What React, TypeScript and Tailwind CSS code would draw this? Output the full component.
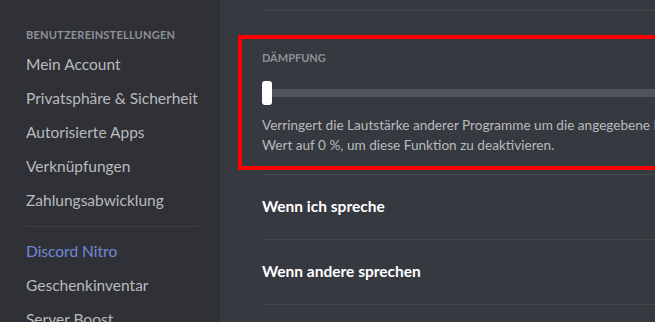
import type { ReactNode } from "react"

const font = { fontFamily: "Lato, 'Noto Sans', sans-serif" }

function NavItem({ children, active }: { children: ReactNode; active?: boolean }) {
    return (
        <div
            className={
                "h-[34px] flex items-center whitespace-nowrap text-[15.5px] leading-5 " +
                (active ? "text-[#7289da]" : "text-[#b9bbbe]")
            }
        >
            {children}
        </div>
    )
}

function Row({ title }: { title: string }) {
    return (
        <div className="h-[65px] flex items-center border-b border-[#42454a] text-[15.5px] font-bold text-white">
            {title}
        </div>
    )
}

export default function App() {
    return (
        <div className="flex w-[655px] h-[322px] overflow-hidden" style={font}>
            {/* Seitenleiste */}
            <aside className="w-[220px] shrink-0 bg-[#2f3136] pl-[26px] pr-[22px] pt-[28px]">
                <div className="h-[14px] text-[11px] leading-[14px] font-bold uppercase tracking-[0.02em] text-[#8e9297]">
                    Benutzereinstellungen
                </div>
                <div className="mt-[5px]">
                    <NavItem>Mein Account</NavItem>
                    <NavItem>Privatsphäre &amp; Sicherheit</NavItem>
                    <NavItem>Autorisierte Apps</NavItem>
                    <NavItem>Verknüpfungen</NavItem>
                    <NavItem>Zahlungsabwicklung</NavItem>
                </div>
                <div className="mt-[9px] mb-[7px] h-px bg-[#3d4046]" />
                <NavItem active>Discord Nitro</NavItem>
                <NavItem>Geschenkinventar</NavItem>
                <NavItem>Server Boost</NavItem>
            </aside>

            {/* Inhalt */}
            <main className="flex-1 bg-[#36393f] overflow-hidden pl-[42px]">
                <div className="w-[700px]">
                    <div className="h-[11px] border-b border-[#42454a]" />

                    <div className="mt-[24px] -ml-[24px] h-[135px] border-4 border-[#ff0000] pl-[20px] pt-[12px]">
                        <div className="text-[11px] leading-[14px] font-bold uppercase text-[#8e9297]">
                            Dämpfung
                        </div>
                        <div className="relative mt-[16px] h-[24px] flex items-center">
                            <div className="h-[8px] w-full rounded-[3px] bg-[#4f545c]" />
                            <div className="absolute left-0 top-0 h-[24px] w-[10px] rounded-[3px] bg-white" />
                        </div>
                        <p className="mt-[10px] text-[13.6px] leading-[20px] text-[#b9bbbe] whitespace-nowrap">
                            Verringert die Lautstärke anderer Programme um die angegebene Prozentzahl. Setze den
                            <br />
                            Wert auf 0 %, um diese Funktion zu deaktivieren.
                        </p>
                    </div>

                    <div className="mt-[4px] border-t border-[#42454a]" />
                    <Row title="Wenn ich spreche" />
                    <Row title="Wenn andere sprechen" />
                </div>
            </main>
        </div>
    )
}
